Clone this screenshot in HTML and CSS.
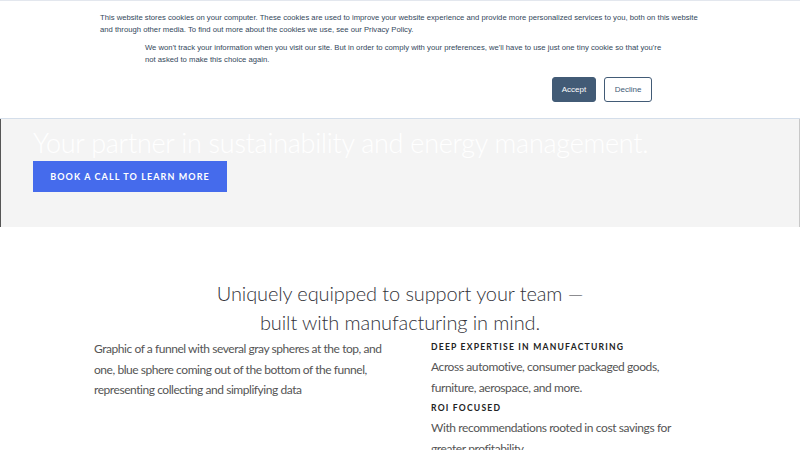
FILE: index.html
```html
<!DOCTYPE html>
<html lang="en">
<head>
<meta charset="utf-8">
<title>Sustainability and energy management</title>
<link rel="stylesheet" href="styles.css">
</head>
<body>
<div class="cookie">
  <p class="cookie-text">This website stores cookies on your computer. These cookies are used to improve your website experience and provide more personalized services to you, both on this website and through other media. To find out more about the cookies we use, see our Privacy Policy.</p>
  <p class="cookie-text cookie-text2">We won't track your information when you visit our site. But in order to comply with your preferences, we'll have to use just one tiny cookie so that you're not asked to make this choice again.</p>
  <div class="cookie-actions">
    <button class="btn-accept">Accept</button>
    <button class="btn-decline">Decline</button>
  </div>
</div>
<section class="hero">
  <h1 class="hero-title">Your partner in sustainability and energy management.</h1>
  <a class="hero-btn" href="#">BOOK A CALL TO LEARN MORE</a>
</section>
<section class="features">
  <h2 class="features-title">Uniquely equipped to support your team —<br>built with manufacturing in mind.</h2>
  <div class="features-cols">
    <p class="alt-text">Graphic of a funnel with several gray spheres at the top, and one, blue sphere coming out of the bottom of the funnel, representing collecting and simplifying data</p>
    <div class="feature-list">
      <h3 class="feature-head">DEEP EXPERTISE IN MANUFACTURING</h3>
      <p class="feature-text">Across automotive, consumer packaged goods, furniture, aerospace, and more.</p>
      <h3 class="feature-head">ROI FOCUSED</h3>
      <p class="feature-text">With recommendations rooted in cost savings for greater profitability.</p>
    </div>
  </div>
</section>
</body>
</html>
```
FILE: styles.css
```css
html, body {
  margin: 0;
  padding: 0;
  background: #fff;
}
body {
  font-family: Lato, "Open Sans", sans-serif;
  overflow: hidden;
}
.cookie {
  box-sizing: border-box;
  height: 119px;
  border-top: 1px solid #e3e7ee;
  border-bottom: 1px solid #d4deea;
  padding: 11px 0 0 100px;
  background: #fff;
}
.cookie-text {
  margin: 0;
  width: 600px;
  font-family: "Liberation Sans", Arial, sans-serif;
  font-size: 7.7px;
  line-height: 12px;
  color: #33475b;
}
.cookie-text2 {
  margin-top: 6px;
  padding-left: 45px;
  width: 528px;
}
.cookie-actions {
  display: flex;
  gap: 8px;
  margin-top: 11px;
  padding-left: 452px;
}
.cookie-actions button {
  box-sizing: border-box;
  height: 25px;
  border-radius: 3px;
  font-family: "Liberation Sans", Arial, sans-serif;
  font-size: 8px;
  padding: 0;
}
.btn-accept {
  width: 44px;
  background: #425b76;
  border: 1px solid #425b76;
  color: #fff;
}
.btn-decline {
  width: 48px;
  background: #fff;
  border: 1px solid #425b76;
  color: #425b76;
}
.hero {
  box-sizing: border-box;
  height: 108px;
  background: #f4f4f4;
  border-left: 1px solid #555;
  border-right: 1px solid #c8c8c8;
  padding: 8px 0 0 32px;
}
.hero-title {
  margin: 0;
  font-weight: 300;
  font-size: 27px;
  letter-spacing: -0.25px;
  line-height: 32px;
  color: #fff;
  white-space: nowrap;
}
.hero-btn {
  display: inline-flex;
  align-items: center;
  justify-content: center;
  margin-top: 2px;
  width: 194px;
  height: 31px;
  background: #456bec;
  color: #fff;
  text-decoration: none;
  font-weight: 700;
  font-size: 9px;
  letter-spacing: 1.1px;
}
.features {
  padding-top: 52px;
}
.features-title {
  margin: 0;
  text-align: center;
  font-weight: 300;
  font-size: 20px;
  letter-spacing: -0.1px;
  line-height: 29px;
  color: #33333a;
}
.features-cols {
  display: flex;
  padding-left: 94px;
  gap: 37px;
  margin-top: 2px;
}
.alt-text {
  margin: 0;
  width: 300px;
  font-size: 12px;
  letter-spacing: -0.45px;
  line-height: 20.7px;
  color: #555;
}
.feature-list {
  width: 250px;
}
.feature-head {
  margin: 0;
  font-size: 8.6px;
  line-height: 16px;
  letter-spacing: 1.2px;
  font-weight: 700;
  color: #222;
}
.feature-text {
  margin: 2px 0 2px;
  font-size: 12px;
  letter-spacing: -0.4px;
  line-height: 20.5px;
  color: #555;
}
```
